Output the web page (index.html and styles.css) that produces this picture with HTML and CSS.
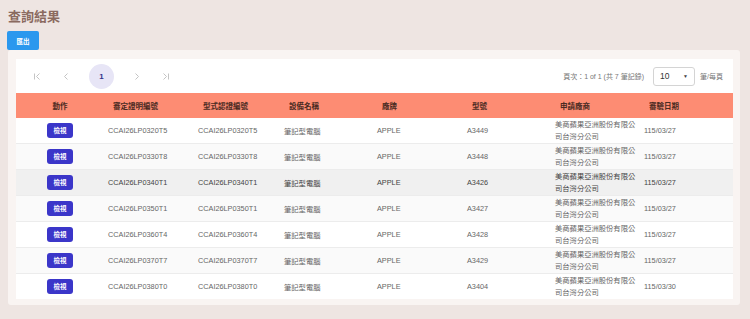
FILE: index.html
```html
<!DOCTYPE html>
<html lang="zh-Hant">
<head>
<meta charset="utf-8">
<title>查詢結果</title>
<link rel="stylesheet" href="styles.css">
</head>
<body>
<h1 class="title">查詢結果</h1>
<button class="export-btn">匯出</button>
<div class="panel">
  <div class="card">
    <div class="pager">
      <div class="pager-nav">
        <span class="pg-btn"><svg width="9" height="9" viewBox="0 0 9 9"><path d="M1.5 1.5v6M6.5 1.5l-3 3 3 3" fill="none" stroke="#c4c4c4" stroke-width="1"/></svg></span>
        <span class="pg-btn"><svg width="9" height="9" viewBox="0 0 9 9"><path d="M5.5 1.5l-3 3 3 3" fill="none" stroke="#c4c4c4" stroke-width="1"/></svg></span>
        <span class="pg-btn pg-current">1</span>
        <span class="pg-btn"><svg width="9" height="9" viewBox="0 0 9 9"><path d="M3.5 1.5l3 3-3 3" fill="none" stroke="#c4c4c4" stroke-width="1"/></svg></span>
        <span class="pg-btn"><svg width="9" height="9" viewBox="0 0 9 9"><path d="M2.5 1.5l3 3-3 3M7.5 1.5v6" fill="none" stroke="#c4c4c4" stroke-width="1"/></svg></span>
      </div>
      <div class="pager-info">
        <span class="info-text">頁次：1 of 1 (共 7 筆記錄)</span>
        <span class="size-select"><span>10</span><span class="caret">▼</span></span>
        <span class="info-text">筆/每頁</span>
      </div>
    </div>
    <div class="grid">
      <div class="row head">
        <div class="cell c-act">動作</div>
        <div class="cell">審定證明編號</div>
        <div class="cell">型式認證編號</div>
        <div class="cell">設備名稱</div>
        <div class="cell">廠牌</div>
        <div class="cell">型號</div>
        <div class="cell">申請廠商</div>
        <div class="cell">審驗日期</div>
      </div>
      <div class="row">
        <div class="cell c-act"><span class="view-btn">檢視</span></div>
        <div class="cell">CCAI26LP0320T5</div>
        <div class="cell">CCAI26LP0320T5</div>
        <div class="cell">筆記型電腦</div>
        <div class="cell">APPLE</div>
        <div class="cell">A3449</div>
        <div class="cell c-co">美商蘋果亞洲股份有限公司台灣分公司</div>
        <div class="cell">115/03/27</div>
      </div>
      <div class="row alt">
        <div class="cell c-act"><span class="view-btn">檢視</span></div>
        <div class="cell">CCAI26LP0330T8</div>
        <div class="cell">CCAI26LP0330T8</div>
        <div class="cell">筆記型電腦</div>
        <div class="cell">APPLE</div>
        <div class="cell">A3448</div>
        <div class="cell c-co">美商蘋果亞洲股份有限公司台灣分公司</div>
        <div class="cell">115/03/27</div>
      </div>
      <div class="row hover">
        <div class="cell c-act"><span class="view-btn">檢視</span></div>
        <div class="cell">CCAI26LP0340T1</div>
        <div class="cell">CCAI26LP0340T1</div>
        <div class="cell">筆記型電腦</div>
        <div class="cell">APPLE</div>
        <div class="cell">A3426</div>
        <div class="cell c-co">美商蘋果亞洲股份有限公司台灣分公司</div>
        <div class="cell">115/03/27</div>
      </div>
      <div class="row alt">
        <div class="cell c-act"><span class="view-btn">檢視</span></div>
        <div class="cell">CCAI26LP0350T1</div>
        <div class="cell">CCAI26LP0350T1</div>
        <div class="cell">筆記型電腦</div>
        <div class="cell">APPLE</div>
        <div class="cell">A3427</div>
        <div class="cell c-co">美商蘋果亞洲股份有限公司台灣分公司</div>
        <div class="cell">115/03/27</div>
      </div>
      <div class="row">
        <div class="cell c-act"><span class="view-btn">檢視</span></div>
        <div class="cell">CCAI26LP0360T4</div>
        <div class="cell">CCAI26LP0360T4</div>
        <div class="cell">筆記型電腦</div>
        <div class="cell">APPLE</div>
        <div class="cell">A3428</div>
        <div class="cell c-co">美商蘋果亞洲股份有限公司台灣分公司</div>
        <div class="cell">115/03/27</div>
      </div>
      <div class="row alt">
        <div class="cell c-act"><span class="view-btn">檢視</span></div>
        <div class="cell">CCAI26LP0370T7</div>
        <div class="cell">CCAI26LP0370T7</div>
        <div class="cell">筆記型電腦</div>
        <div class="cell">APPLE</div>
        <div class="cell">A3429</div>
        <div class="cell c-co">美商蘋果亞洲股份有限公司台灣分公司</div>
        <div class="cell">115/03/27</div>
      </div>
      <div class="row last">
        <div class="cell c-act"><span class="view-btn">檢視</span></div>
        <div class="cell">CCAI26LP0380T0</div>
        <div class="cell">CCAI26LP0380T0</div>
        <div class="cell">筆記型電腦</div>
        <div class="cell">APPLE</div>
        <div class="cell">A3404</div>
        <div class="cell c-co">美商蘋果亞洲股份有限公司台灣分公司</div>
        <div class="cell">115/03/30</div>
      </div>
    </div>
  </div>
</div>
</body>
</html>
```
FILE: styles.css
```css
* { box-sizing: border-box; }
html, body { margin: 0; padding: 0; }
body {
  background: #eee5e2;
  font-family: "Liberation Sans", "Noto Sans CJK TC", sans-serif;
  padding: 0 10px 0 8px;
  height: 319px;
  overflow: hidden;
}
.title {
  margin: 0;
  padding-top: 8px;
  height: 31px;
  font-size: 13px;
  line-height: 16px;
  font-weight: 700;
  color: #8a6a5f;
  font-family: "Noto Sans CJK TC", sans-serif;
}
.export-btn {
  display: block;
  width: 32px;
  height: 19px;
  margin: 0 0 0 -1px;
  padding: 0;
  border: none;
  border-radius: 2px;
  background: #2b98ee;
  color: #fff;
  font-size: 6.5px;
  font-family: "Noto Sans CJK TC", sans-serif;
  font-weight: 700;
}
.panel {
  background: #f9f4f2;
  border-radius: 3px;
  padding: 9px 7px 6px 8px;
}
.card {
  background: #fff;
}
.pager {
  height: 34px;
  display: flex;
  align-items: center;
  justify-content: space-between;
  padding: 0 10px 0 9px;
}
.pager-nav {
  display: flex;
  align-items: center;
  gap: 4px;
}
.pg-btn {
  width: 25px;
  height: 25px;
  display: flex;
  align-items: center;
  justify-content: center;
}
.pg-current {
  margin: 0 6px;
  border-radius: 50%;
  background: #e7e5f6;
  color: #34338a;
  font-size: 8px;
  font-weight: 700;
}
.pager-info {
  display: flex;
  align-items: center;
}
.info-text {
  font-size: 7px;
  color: #777;
}
.size-select {
  width: 42px;
  height: 19px;
  margin: 0 5px 0 9px;
  border: 1px solid #d4d4d4;
  border-radius: 3px;
  display: flex;
  align-items: center;
  justify-content: space-between;
  padding: 0 6px 0 6px;
  font-size: 8.5px;
  color: #333;
}
.caret {
  font-size: 5px;
  color: #444;
}
.grid {
  display: flex;
  flex-direction: column;
}
.row {
  display: grid;
  grid-template-columns: 88px 90px 86px 93px 90px 88px 89px 93px;
  height: 26px;
  align-items: center;
  border-bottom: 1px solid #ececec;
  font-size: 7.3px;
  color: #666;
  background: #fff;
}
.row.alt { background: #fafafa; }
.row.hover { background: #f0f0f0; color: #444; }
.row.last { height: 25px; border-bottom: none; }
.row.head {
  height: 25px;
  background: #fd8c73;
  color: #4a2a22;
  font-weight: 700;
  font-size: 7.5px;
  border-bottom: none;
}
.cell {
  padding: 0 4px;
  white-space: nowrap;
  font-family: "Liberation Sans", "Noto Sans CJK TC", sans-serif;
}
.head .cell { padding-left: 9px; }
.head .cell.c-act, .cell.c-act {
  padding: 0;
  text-align: center;
}
.cell.c-co {
  white-space: normal;
  line-height: 12px;
  padding-right: 0;
}
.view-btn {
  display: inline-block;
  width: 26px;
  height: 15px;
  line-height: 15px;
  border-radius: 3px;
  background: #3b36c9;
  color: #fff;
  font-size: 6.5px;
  font-weight: 700;
  text-align: center;
}
```
